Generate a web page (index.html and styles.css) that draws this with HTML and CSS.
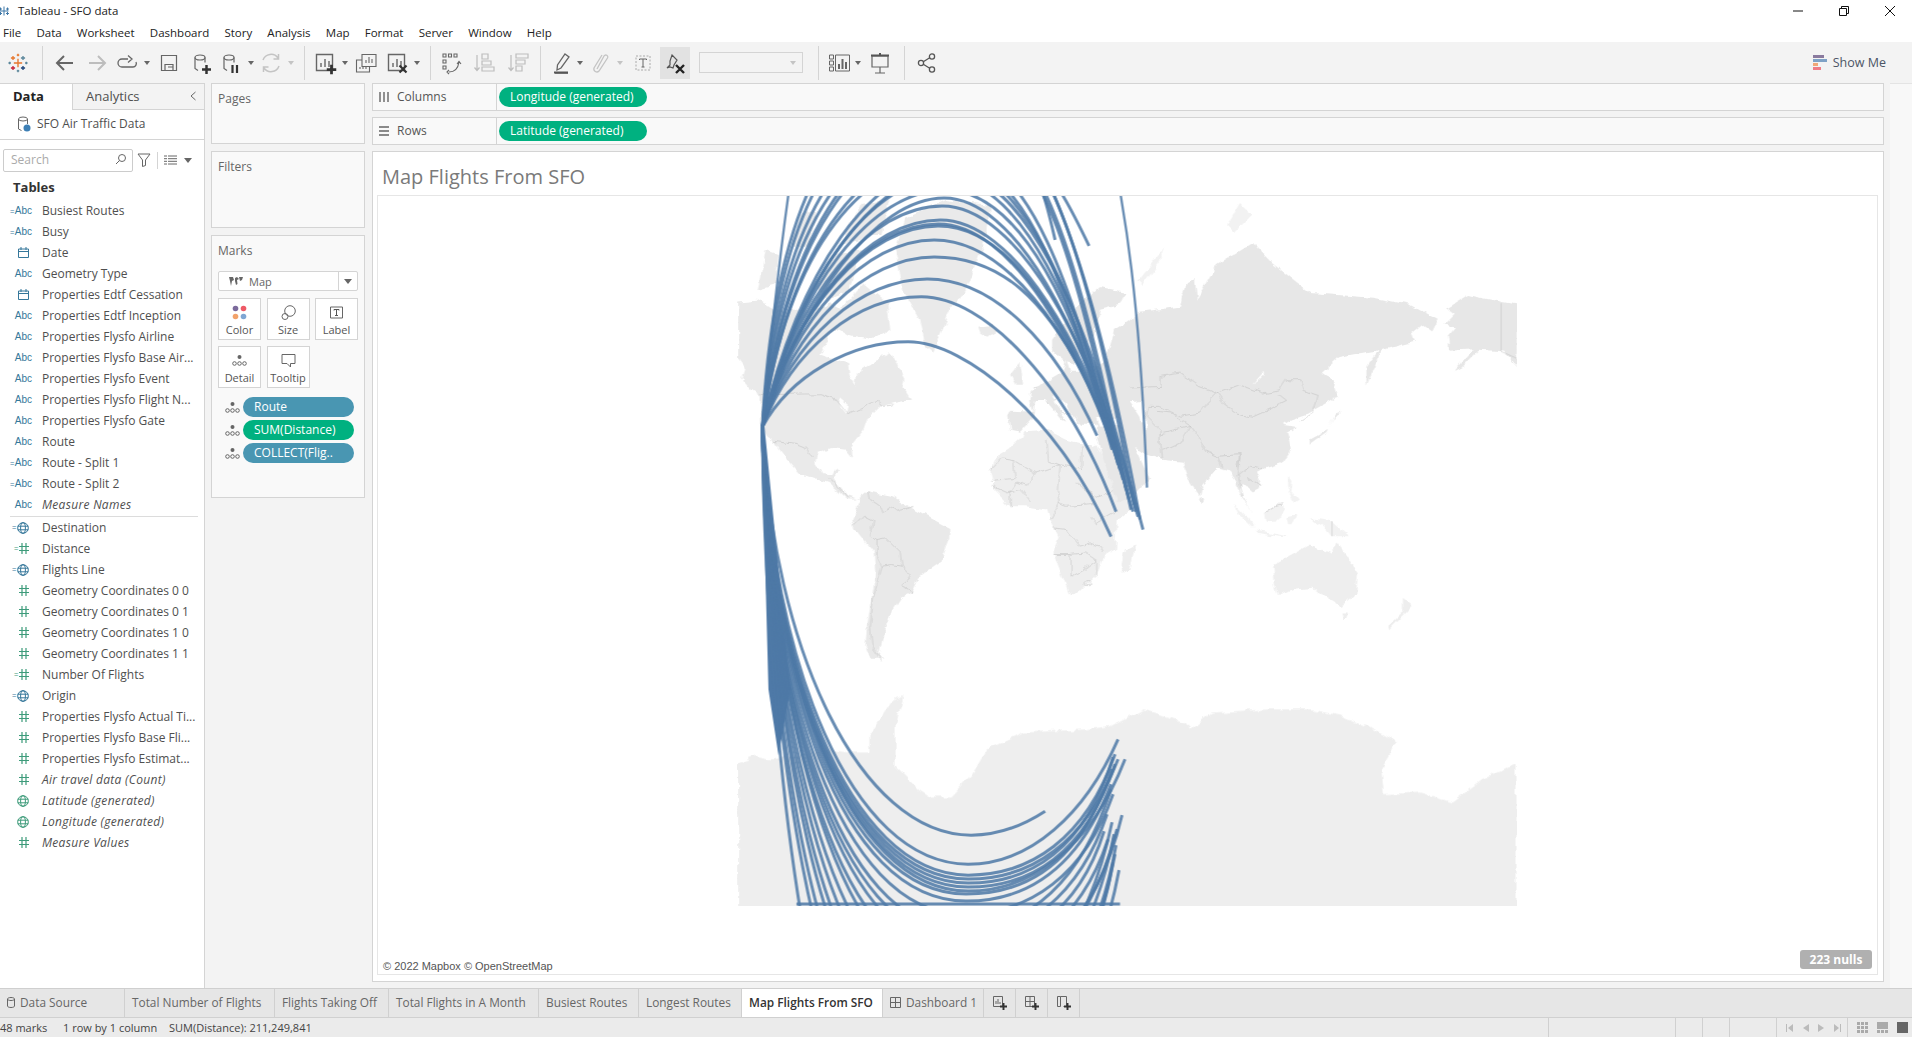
FILE: index.html
```html
<!DOCTYPE html>
<html lang="en">
<head>
<meta charset="utf-8">
<title>Tableau - SFO data</title>
<link rel="stylesheet" href="styles.css">
</head>
<body>
<svg class="sprite" aria-hidden="true">
  <defs>
    <symbol id="i-logo" viewBox="0 0 24 24">
      <g fill="none" stroke-width="1.6">
        <path stroke="#e8762c" d="M12 7v10M7 12h10"/>
        <path stroke="#e8762c" d="M6 3.500v5M3.500 6h5M12 1v3M10.500 2.500h3"/>
        <path stroke="#5b879b" d="M18 3.500v5M15.500 6h5M22 10.500v3M20.500 12h3M2 10.500v3M.5 12h3"/>
        <path stroke="#c72037" d="M6 15.500v5M3.500 18h5"/>
        <path stroke="#1f447a" d="M18 15.500v5M15.500 18h5"/>
        <path stroke="#5b879b" d="M12 20v3M10.500 21.500h3"/>
      </g>
    </symbol>
    <symbol id="i-hash" viewBox="0 0 10 11"><path d="M3 0v11M7 0v11M0 3.500h10M0 7.500h10" fill="none" stroke="currentColor" stroke-width="1.200"/></symbol>
    <symbol id="i-globe" viewBox="0 0 12 12"><g fill="none" stroke="currentColor"><circle cx="6" cy="6" r="5.300"/><ellipse cx="6" cy="6" rx="2.400" ry="5.300"/><path d="M.7 4.200h10.600M.7 7.800h10.600"/></g></symbol>
    <symbol id="i-cal" viewBox="0 0 11 11"><path d="M.5 2h10v8.500H.5zM.5 4.500h10M3 0v3M8 0v3" fill="none" stroke="currentColor"/></symbol>
    <symbol id="i-detail" viewBox="0 0 15 11"><g fill="none" stroke="#666"><circle cx="2.500" cy="8.500" r="1.800"/><circle cx="7.500" cy="8.500" r="1.800"/><circle cx="12.500" cy="8.500" r="1.800"/></g><circle cx="7.500" cy="2" r="2" fill="#666"/></symbol>
    <symbol id="i-plus" viewBox="0 0 8 8"><path d="M4 0v8M0 4h8" stroke="#333" stroke-width="2.200"/></symbol>
  </defs>
</svg>
<div class="app">
  <header class="titlebar">
    <svg class="title-logo" viewBox="0 0 24 24"><path d="M12 3v18M3 12h18M5 5v6M2 8h6M19 5v6M16 8h6M5 14v6M2 17h6M19 14v6M16 17h6" fill="none" stroke="#3f78a8" stroke-width="2"/></svg>
    <span class="title-text">Tableau - SFO data</span>
    <div class="winctl">
      <svg viewBox="0 0 10 10"><path d="M0 5h10" stroke="#111"/></svg>
      <svg viewBox="0 0 10 10"><path d="M.5 2.500h7v7h-7zM2.500 2.500v-2h7v7h-2" fill="none" stroke="#111"/></svg>
      <svg viewBox="0 0 10 10"><path d="M0 0l10 10M10 0L0 10" stroke="#111"/></svg>
    </div>
  </header>
  <nav class="menubar">
    <span>File</span><span>Data</span><span>Worksheet</span><span>Dashboard</span><span>Story</span><span>Analysis</span><span>Map</span><span>Format</span><span>Server</span><span>Window</span><span>Help</span>
  </nav>
  <div class="toolbar">
    <div class="tb w30 m3"><svg width="20" height="20" viewBox="0 0 24 24"><use href="#i-logo"/></svg></div>
    <i class="sep m9"></i>
    <div class="tb w30 m7"><svg width="24" height="24" viewBox="0 0 24 24"><path d="M20 12H4M11 5l-7 7 7 7" fill="none" stroke="#666" stroke-width="2"/></svg></div>
    <div class="tb w30 m2"><svg width="24" height="24" viewBox="0 0 24 24"><path d="M4 12h16M13 5l7 7-7 7" fill="none" stroke="#bdbdbd" stroke-width="2"/></svg></div>
    <div class="tb w30"><svg width="24" height="24" viewBox="0 0 24 24"><path d="M13 8H7a4 4 0 0 0 0 8h11a3.500 3.500 0 0 0 3-5M13 4.500l4 3.500-4 3.500" fill="none" stroke="#666" stroke-width="1.300"/></svg></div>
    <div class="tb w10"><b class="caret"></b></div>
    <div class="tb w30 m2"><svg width="24" height="24" viewBox="0 0 24 24"><path d="M4.500 4.500h15v15h-15zM8 19.500v-6h8v6M11 16h5" fill="none" stroke="#666" stroke-width="1.200"/></svg></div>
    <div class="tb w30 m2"><svg width="24" height="24" viewBox="0 0 24 24"><g fill="none" stroke="#666" stroke-width="1.200"><ellipse cx="11" cy="6.500" rx="5" ry="2.500"/><path d="M6 6.500v11l3 2M16 6.500v5"/></g><use href="#i-plus" x="13" y="14" width="9" height="9"/></svg></div>
    <div class="tb w30"><svg width="24" height="24" viewBox="0 0 24 24"><g fill="none" stroke="#666" stroke-width="1.200"><ellipse cx="10" cy="6.500" rx="5" ry="2.500"/><path d="M5 6.500v11l3 2M15 6.500v5"/></g><path d="M13.500 14v8M18 14v8" stroke="#333" stroke-width="2.200"/></svg></div>
    <div class="tb w10"><b class="caret"></b></div>
    <div class="tb w30"><svg width="24" height="24" viewBox="0 0 24 24"><path d="M4 9a8.500 8.500 0 0 1 15-2M20 15a8.500 8.500 0 0 1-15 2M19.500 3v5h-5M4.500 21v-5h5" fill="none" stroke="#c4c4c4" stroke-width="1.500"/></svg></div>
    <div class="tb w10"><b class="caret off"></b></div>
    <i class="sep m8"></i>
    <div class="tb w30 m5"><svg width="24" height="24" viewBox="0 0 24 24"><path d="M3.500 3.500h16v16h-16zM8 16v-4M12 16V8M16 16v-6" fill="none" stroke="#666" stroke-width="1.400"/><use href="#i-plus" x="13.500" y="13.500" width="10" height="10"/></svg></div>
    <div class="tb w10"><b class="caret"></b></div>
    <div class="tb w30 m1"><svg width="24" height="24" viewBox="0 0 24 24"><path d="M8 3.500h14v12H8zM12 12V9M15 12V6M18 12V8M8 9H2.500v12h13v-5.500M6 18v-2M9 18v-2M12 18v-2" fill="none" stroke="#666" stroke-width="1.100"/></svg></div>
    <div class="tb w30 m1"><svg width="24" height="24" viewBox="0 0 24 24"><path d="M3.500 3.500h16v16h-16zM8 16v-4M12 16V8M16 16v-6" fill="none" stroke="#666" stroke-width="1.400"/><path d="M14.500 14.500l7 7M21.500 14.500l-7 7" stroke="#333" stroke-width="2.200"/></svg></div>
    <div class="tb w10"><b class="caret"></b></div>
    <i class="sep m8"></i>
    <div class="tb w30 m5"><svg width="24" height="24" viewBox="0 0 24 24"><path d="M4 3h3v3H4zM9.500 3h3v3h-3zM15 3h3v3h-3zM4 9h3v3H4zM4 15h3v3H4zM10 21c5 0 9-3 10-10M18 13l2-2.500 2 2.500M10 19l-2 2 2 2" fill="none" stroke="#666" stroke-width="1.100"/></svg></div>
    <div class="tb w30 m3"><svg width="24" height="24" viewBox="0 0 24 24"><path d="M5 4v15M2.500 16.500L5 19.500l2.500-3M10 3h6v5h-6zM10 10h9v4h-9zM10 16h12v4H10z" fill="none" stroke="#bdbdbd" stroke-width="1.200"/></svg></div>
    <div class="tb w30 m4"><svg width="24" height="24" viewBox="0 0 24 24"><path d="M5 4v15M2.500 16.500L5 19.500l2.500-3M10 3h12v4H10zM10 9h9v4h-9zM10 15h6v5h-6z" fill="none" stroke="#bdbdbd" stroke-width="1.200"/></svg></div>
    <i class="sep m7"></i>
    <div class="tb w26 m8"><svg width="24" height="24" viewBox="0 0 24 24"><path d="M15 3l4 3-8 11-4 2 .5-5zM5 22h13" fill="none" stroke="#666" stroke-width="1.300"/><path d="M4 21.500h14" stroke="#555" stroke-width="2"/></svg></div>
    <div class="tb w10"><b class="caret"></b></div>
    <div class="tb w26 m2"><svg width="24" height="24" viewBox="0 0 24 24"><path d="M9 18L16 5a2 2 0 0 1 3.500 2L11 20a3 3 0 0 1-5-3l8-13" fill="none" stroke="#c4c4c4" stroke-width="1.300"/></svg></div>
    <div class="tb w10 m2"><b class="caret off"></b></div>
    <div class="tb w26 m5"><svg width="24" height="24" viewBox="0 0 24 24"><path d="M5 5h14v14H5z" fill="none" stroke="#aaa" stroke-dasharray="2 1.500"/><path d="M8.500 9V8h7v1M12 8v8M10.500 16h3" fill="none" stroke="#666"/></svg></div>
    <div class="tb w30 m4 active"><svg width="24" height="24" viewBox="0 0 24 24"><path d="M9 3l5 5-3 5-1 3-3-1-3 1 3-3 0-4z" fill="none" stroke="#555" stroke-width="1.200" transform="translate(0 1)"/><path d="M13 14l8 8M21 14l-8 8" stroke="#222" stroke-width="2.400"/></svg></div>
    <div class="tb-select m9"><b class="caret off"></b></div>
    <i class="sep m15"></i>
    <div class="tb w26 m8"><svg width="24" height="24" viewBox="0 0 24 24"><path d="M1.500 4h4v4h-4zM1.500 10h4v4h-4zM1.500 16h4v4h-4zM7.500 4h14v16h-14z" fill="none" stroke="#666" stroke-width="1"/><path d="M11 18v-5M14.500 18V8M18 18v-7" stroke="#666" stroke-width="2"/></svg></div>
    <div class="tb w10"><b class="caret"></b></div>
    <div class="tb w28 m3"><svg width="24" height="24" viewBox="0 0 24 24"><path d="M4 5h16v11H4zM12 16v6M7 22h10" fill="none" stroke="#666" stroke-width="1.200"/><path d="M3 4.500h18M12 2v2" stroke="#555" stroke-width="2"/></svg></div>
    <i class="sep m10"></i>
    <div class="tb w30 m7"><svg width="24" height="24" viewBox="0 0 24 24"><g fill="none" stroke="#555" stroke-width="1.300"><circle cx="6" cy="12" r="2.600"/><circle cx="17" cy="5.500" r="2.600"/><circle cx="17" cy="18.500" r="2.600"/><path d="M8.300 10.700l6.400-3.900M8.300 13.300l6.400 3.900"/></g></svg></div>
    <div class="showme">
      <svg width="14" height="16" viewBox="0 0 14 16"><path fill="#8a7a9e" d="M0 0h11v3H0z"/><path fill="#7fa2c6" d="M0 4h14v3H0z"/><path fill="#f0a777" d="M0 8h5v3H0z"/><path fill="#ef7c86" d="M0 12h8v3H0z"/></svg>
      <span>Show Me</span>
    </div>
  </div>

  <main class="main">
    <aside class="datapane">
      <div class="tabs"><div class="tab on">Data</div><div class="tab">Analytics<svg class="collapse" width="8" height="10" viewBox="0 0 8 10"><path d="M6.500 1l-4.500 4 4.500 4" fill="none" stroke="#666"/></svg></div></div>
      <div class="source">
        <svg width="14" height="16" viewBox="0 0 14 16"><g fill="none" stroke="#666"><ellipse cx="6" cy="3" rx="4.500" ry="2"/><path d="M1.500 3v10l3 1.500M10.500 3v5"/></g><circle cx="10" cy="12" r="3.500" fill="#3d7fb5"/></svg>
        <span>SFO Air Traffic Data</span>
      </div>
      <div class="searchrow">
        <div class="search"><span>Search</span><svg width="12" height="12" viewBox="0 0 12 12"><circle cx="7" cy="5" r="3.500" fill="none" stroke="#666"/><path d="M4.500 7.500L1 11" stroke="#666"/></svg></div>
        <svg class="funnel" width="14" height="14" viewBox="0 0 14 14"><path d="M1 1h12L8.500 7v5.500l-3 1V7z" fill="none" stroke="#666"/></svg>
        <i class="vsep"></i>
        <svg width="13" height="10" viewBox="0 0 13 10"><path d="M0 1h3M4 1h9M0 3.700h3M4 3.700h9M0 6.300h3M4 6.300h9M0 9h3M4 9h9" stroke="#666"/></svg>
        <b class="caret dark"></b>
      </div>
      <div class="tables">Tables</div>
      <ul class="fields">
        <li><span class="ty"><em>=</em>Abc</span>Busiest Routes</li>
        <li><span class="ty"><em>=</em>Abc</span>Busy</li>
        <li><span class="ty gl"><svg class="cal" viewBox="0 0 11 11"><use href="#i-cal"/></svg></span>Date</li>
        <li><span class="ty">Abc</span>Geometry Type</li>
        <li><span class="ty gl"><svg class="cal" viewBox="0 0 11 11"><use href="#i-cal"/></svg></span>Properties Edtf Cessation</li>
        <li><span class="ty">Abc</span>Properties Edtf Inception</li>
        <li><span class="ty">Abc</span>Properties Flysfo Airline</li>
        <li><span class="ty">Abc</span>Properties Flysfo Base Air...</li>
        <li><span class="ty">Abc</span>Properties Flysfo Event</li>
        <li><span class="ty">Abc</span>Properties Flysfo Flight N...</li>
        <li><span class="ty">Abc</span>Properties Flysfo Gate</li>
        <li><span class="ty">Abc</span>Route</li>
        <li><span class="ty"><em>=</em>Abc</span>Route - Split 1</li>
        <li><span class="ty"><em>=</em>Abc</span>Route - Split 2</li>
        <li class="it"><span class="ty">Abc</span>Measure Names</li>
      </ul>
      <hr class="divider">
      <ul class="fields">
        <li><span class="ty gl"><em>=</em><svg class="globe" viewBox="0 0 12 12"><use href="#i-globe"/></svg></span>Destination</li>
        <li><span class="ty gl grn"><em>=</em><svg class="hash" viewBox="0 0 10 11"><use href="#i-hash"/></svg></span>Distance</li>
        <li><span class="ty gl"><em>=</em><svg class="globe" viewBox="0 0 12 12"><use href="#i-globe"/></svg></span>Flights Line</li>
        <li><span class="ty gl grn"><svg class="hash" viewBox="0 0 10 11"><use href="#i-hash"/></svg></span>Geometry Coordinates 0 0</li>
        <li><span class="ty gl grn"><svg class="hash" viewBox="0 0 10 11"><use href="#i-hash"/></svg></span>Geometry Coordinates 0 1</li>
        <li><span class="ty gl grn"><svg class="hash" viewBox="0 0 10 11"><use href="#i-hash"/></svg></span>Geometry Coordinates 1 0</li>
        <li><span class="ty gl grn"><svg class="hash" viewBox="0 0 10 11"><use href="#i-hash"/></svg></span>Geometry Coordinates 1 1</li>
        <li><span class="ty gl grn"><em>=</em><svg class="hash" viewBox="0 0 10 11"><use href="#i-hash"/></svg></span>Number Of Flights</li>
        <li><span class="ty gl"><em>=</em><svg class="globe" viewBox="0 0 12 12"><use href="#i-globe"/></svg></span>Origin</li>
        <li><span class="ty gl grn"><svg class="hash" viewBox="0 0 10 11"><use href="#i-hash"/></svg></span>Properties Flysfo Actual Ti...</li>
        <li><span class="ty gl grn"><svg class="hash" viewBox="0 0 10 11"><use href="#i-hash"/></svg></span>Properties Flysfo Base Fli...</li>
        <li><span class="ty gl grn"><svg class="hash" viewBox="0 0 10 11"><use href="#i-hash"/></svg></span>Properties Flysfo Estimat...</li>
        <li class="it"><span class="ty gl grn"><svg class="hash" viewBox="0 0 10 11"><use href="#i-hash"/></svg></span>Air travel data (Count)</li>
        <li class="it"><span class="ty gl grn"><svg class="globe" viewBox="0 0 12 12"><use href="#i-globe"/></svg></span>Latitude (generated)</li>
        <li class="it"><span class="ty gl grn"><svg class="globe" viewBox="0 0 12 12"><use href="#i-globe"/></svg></span>Longitude (generated)</li>
        <li class="it"><span class="ty gl grn"><svg class="hash" viewBox="0 0 10 11"><use href="#i-hash"/></svg></span>Measure Values</li>
      </ul>
    </aside>

    <section class="cards">
      <div class="card pages"><h3>Pages</h3></div>
      <div class="card filters"><h3>Filters</h3></div>
      <div class="card marks">
        <h3>Marks</h3>
        <div class="marktype">
          <svg width="14" height="9" viewBox="0 0 14 9"><path d="M0 0h4l1 3-2 1-1 5-1-5zM6 1l2-1 2 2-2 1 .5 4-1.500 1-1-4zM10 0h4l-1 3-2 1z" fill="#666"/></svg>
          <span>Map</span><div class="mt-arrow"><b class="caret dark"></b></div>
        </div>
        <div class="markbtns">
          <div class="mb"><svg width="15" height="15" viewBox="0 0 15 15"><circle cx="3.500" cy="3.500" r="2.800" fill="#7b6a9c"/><circle cx="11.500" cy="3.500" r="2.800" fill="#ee5a66"/><circle cx="3.500" cy="11.500" r="2.800" fill="#f2a26b"/><circle cx="11.500" cy="11.500" r="2.800" fill="#7fa6d3"/></svg><span>Color</span></div>
          <div class="mb"><svg width="15" height="15" viewBox="0 0 15 15"><g fill="none" stroke="#666"><circle cx="9" cy="6" r="5.300"/><circle cx="4" cy="11.500" r="3"/></g></svg><span>Size</span></div>
          <div class="mb"><svg width="15" height="15" viewBox="0 0 15 15"><path d="M1.500 2h12v11h-12z" fill="none" stroke="#666"/><path d="M5 5.500V4.500h5v1M7.500 4.500v6M6 10.500h3" fill="none" stroke="#555"/></svg><span>Label</span></div>
          <div class="mb"><svg width="15" height="15" viewBox="0 0 15 11"><use href="#i-detail"/></svg><span>Detail</span></div>
          <div class="mb"><svg width="15" height="15" viewBox="0 0 15 15"><path d="M1 1.500h13v9H9.500V14L6 10.500H1z" fill="none" stroke="#666"/></svg><span>Tooltip</span></div>
        </div>
        <div class="pillrow"><svg width="15" height="11" viewBox="0 0 15 11"><use href="#i-detail"/></svg><div class="pill blue">Route</div></div>
        <div class="pillrow"><svg width="15" height="11" viewBox="0 0 15 11"><use href="#i-detail"/></svg><div class="pill green">SUM(Distance)</div></div>
        <div class="pillrow"><svg width="15" height="11" viewBox="0 0 15 11"><use href="#i-detail"/></svg><div class="pill blue">COLLECT(Flig..</div></div>
      </div>
    </section>

    <section class="work">
      <div class="shelf">
        <div class="shelf-label"><svg width="10" height="10" viewBox="0 0 10 10"><path d="M1 0v10M5 0v10M9 0v10" stroke="#666" stroke-width="1.400"/></svg><span>Columns</span></div>
        <div class="shelf-pill">Longitude (generated)</div>
      </div>
      <div class="shelf">
        <div class="shelf-label"><svg width="10" height="10" viewBox="0 0 10 10"><path d="M0 1h10M0 5h10M0 9h10" stroke="#666" stroke-width="1.400"/></svg><span>Rows</span></div>
        <div class="shelf-pill">Latitude (generated)</div>
      </div>
      <div class="viz">
        <h1 class="viz-title">Map Flights From SFO</h1>
        <div class="canvas">
          <svg class="map" viewBox="378 196 1499 779">
            <defs>
              <clipPath id="land-clip"><rect x="737" y="190" width="780" height="716"/></clipPath>
              <clipPath id="arc-clip"><rect x="378" y="196" width="1499" height="710"/></clipPath>
              <filter id="rough" x="-5%" y="-5%" width="110%" height="110%">
                <feTurbulence type="fractalNoise" baseFrequency=".09" numOctaves="3" seed="4" result="n"/>
                <feDisplacementMap in="SourceGraphic" in2="n" scale="7" xChannelSelector="R" yChannelSelector="G"/>
                <feGaussianBlur stdDeviation=".35"/>
              </filter>
            </defs>
            <g clip-path="url(#land-clip)">
             <g filter="url(#rough)">
              <!-- Antarctica -->
              <path class="l-ant" transform="translate(720 580) scale(.523 .3333)" d="M33 550L65 530 100 540 200 510 250 520 285 520 285 470 325 370 350 350 335 440 335 560 380 630 405 655 440 655 480 590 510 510 580 460 700 450 750 440 810 390 890 430 900 450 940 400 1050 390 1130 390 1190 410 1250 450 1295 490 1265 570 1270 645 1340 640 1400 670 1460 600 1524 555V1000H33z"/>
              <!-- Arctic and Greenland -->
              <g class="l-am">
                <path d="M903 290L895 250 905 218 945 200 990 205 985 240 965 290 950 310 933 352 925 345 920 320z"/>
                <path d="M757 290L765 250 778 255 775 285zM790 247L800 215 815 210 810 245zM840 245L860 205 890 200 880 235zM815 285L835 255 860 250 850 290 825 300z"/>
                <path d="M978 327L994 325 997 332 987 337 980 333zM1010 375L1020 362 1023 385 1015 385z"/>
              </g>
              <!-- North America -->
              <g transform="translate(730 290) scale(.3333)">
                <path class="l-am" d="M22 35L80 30 130 60 190 60 260 60 300 40 350 70 340 100 300 130 270 195 350 220 355 260 375 290 380 250 440 210 480 190 525 270 520 290 545 330 490 340 450 350 410 390 400 420 360 470 365 505 345 480 300 475 260 490 255 520 275 550 305 555 315 535 325 545 310 570 350 620 395 635 415 605 385 630 350 630 295 580 205 550 165 505 130 455 110 440 92 410 90 320 60 300 35 270 45 235 22 205z"/>
                <path class="l-am" d="M310 110L340 50 400 -20 470 40 480 120 420 150 360 140z"/>
                <path class="l-sea" d="M325 320L355 345 350 375 330 350z"/>
                <path class="l-sa" d="M415 605L490 620 555 660 660 715 660 745 630 820 570 860 545 910 515 925 490 960 465 1010 445 1100 460 1105 420 1105 405 1070 410 1010 425 920 435 850 430 790 375 720 365 690 385 640 395 620z"/>
                <path class="l-af" d="M780 540L800 500 835 480 880 440 885 425 950 420 1010 450 1050 460 1090 475 1100 470 1130 520 1160 590 1200 640 1205 655 1160 690 1155 780 1120 800 1100 860 1050 910 1020 918 1000 870 970 790 985 740 960 690 950 660 880 650 840 650 790 600z"/>
                <path class="l-af" d="M1215 765L1200 840 1180 850 1175 820 1185 780z"/>
                <g class="border">
                  <path d="M90 315L270 312 320 330 355 375 400 355 440 335 455 350 490 345M130 455L200 465 225 475 245 505"/>
                  <path d="M415 605L420 630 450 650 455 670 490 650 510 665 555 650M370 710L400 680 430 695 420 740 440 750 465 745 510 790 515 830 535 850 540 870 515 890 545 910M440 750L440 800 455 830 485 825 515 830M455 830L430 920 420 1010 425 1070 450 1110M295 565L320 590 350 625"/>
                  <path d="M780 540L815 505 850 510 855 570 780 575M850 510L915 550 990 525 955 510 950 450M915 550L890 590 860 580 840 610 840 650M990 525L985 600 990 640 960 690M990 525L1055 540 1055 470M1040 580L1100 620 1160 600M1160 665L1100 700 1085 680M985 640L1010 650 1090 645M970 715L1010 720 1050 770 1080 760 1110 770 1120 790M970 795L1020 795 1020 860 1060 840 1100 810M1020 795L1070 790 1100 810M1100 860V810M785 590L830 610 870 600 900 640"/>
                  <circle cx="1075" cy="882" r="7"/>
                  <path d="M910 295L935 290 950 340 1000 320 1060 340 1090 325M950 340L1010 370 1050 385"/>
                </g>
              </g>
              <!-- Europe and Asia -->
              <path class="l-as" d="M1052 340L1072 312 1100 287 1125 292 1120 305 1100 310 1095 335 1080 352 1075 365 1065 362 1052 352z"/>
              <path class="l-as" d="M1008 415L1010 411 1033 412 1030 400 1032 392 1045 382 1062 372 1066 360 1070 372 1085 372 1105 362 1115 330 1128 322 1140 312 1180 307 1185 285 1195 280 1197 300 1217 265 1253 243 1272 263 1311 293 1373 298 1410 305 1438 320 1432 332 1422 325 1412 333 1415 342 1383 350 1363 353 1340 357 1322 373 1337 383 1333 400 1310 413 1298 417 1283 425 1297 427 1287 433 1292 450 1283 463 1267 468 1257 473 1263 487 1253 493 1242 483 1240 490 1252 513 1242 497 1230 470 1218 467 1202 487 1200 497 1187 477 1182 462 1162 460 1147 455 1135 447 1145 470 1150 478 1133 497 1118 505 1100 450 1097 437 1098 425 1080 425 1073 418 1065 402 1052 396 1066 422 1062 420 1045 400 1035 402 1033 418 1020 432 1010 430z"/>
              <path class="l-isl" d="M1138 280L1165 247 1160 262 1143 285zM1227 225L1240 203 1253 215 1235 233z"/>
              <path class="l-sea" d="M1097 418H1117L1120 425 1100 427z"/>
              <g transform="translate(1110 270) scale(.3333)">
                <path class="l-sea" d="M60 395L95 390 105 430 110 480 100 470 90 440z"/>
                <path class="l-sea" d="M465 305L430 345 445 335 465 315z"/>
                <path class="l-as" d="M1010 115L1075 75 1170 95 1225 105 1225 290 1180 245 1110 240 1060 290 1030 305 1095 235 1020 240 1015 200 1040 170 1005 165 1035 135z"/>
                <path class="l-as" d="M770 290L820 225 800 280 770 345zM670 330L685 380 670 385zM680 425L655 480 600 510 600 525 650 490 670 450 695 420z"/>
                <circle class="l-as" cx="275" cy="690" r="7"/>
                <path class="l-isl" d="M375 705L440 770 425 770 385 730zM440 780L530 800 520 803 440 790zM465 730L510 700 520 720 495 760 470 755zM530 740L560 735 545 770 535 770zM535 620L548 640 545 660 570 690 555 700 535 650zM600 745L667 755 720 800 665 800 640 770z"/>
                <path class="l-af" d="M490 885L600 825 665 850 680 815 745 910 740 970 695 1010 650 985 610 955 560 960 505 980 495 945z"/>
                <path class="l-af" d="M695 1035L715 1035 710 1052 700 1052zM880 985L908 1010 880 1040 840 1080 836 1070 880 1030zM40 850L75 825 60 900 45 910 35 890z"/>
                <g class="border">
                  <path d="M60 355L150 350 150 320 210 310 265 350 320 370 290 400 270 430 210 440 150 410 115 410 110 440"/>
                  <path d="M320 370L390 345 460 370 510 360 530 330 570 330 580 365 625 380 610 430 570 455M320 370L345 405 380 430 435 440 480 420 530 395 505 375"/>
                  <path d="M110 440L150 480 150 530 155 570M150 490L240 470 270 510 290 545 325 560 390 555 385 590M240 470L210 520 155 545M325 560L335 590M390 555L385 620 400 680M385 620L420 590 460 600M410 620L440 640 460 650M140 425L185 430 210 450 240 470"/>
                  <path d="M470 730L500 710 520 705"/>
                </g>
              </g>
             </g>
             <g transform="translate(1110 270) scale(.3333)">
               <path class="border" d="M667 755V800M1175 100V245L1220 265"/>
             </g>
            </g>
            <g class="arcs" clip-path="url(#arc-clip)">
              <path class="bundle" d="M761 427L768 690 778 756 790 690 780 590 764 427z"/>
              <path d="M762 427C790 376 850 342 908 342S1060 420 1111 537"/>
              <path d="M762 427C792 349 857 297 921 297S1067 383 1116 512"/>
              <path d="M762 427C793 338 861 279 927 279S1055 342 1097 436"/>
              <path d="M762 427C795 325 865 257 934 257S1045 303 1082 372"/>
              <path d="M762 427C795 315 865 240 934 240S1070 325 1116 452"/>
              <path d="M762 427C795 305 868 224 938 224S1084 339 1133 512"/>
              <path d="M762 427C796 303 869 220 940 220S1088 339 1138 517"/>
              <path d="M762 427C795 306 868 226 938 226S1075 323 1120 470"/>
              <path d="M762 427C796 294 870 206 942 206S1093 336 1143 530"/>
              <path d="M762 427C800 300 875 198 944 198S1085 325 1129 500"/>
              <path d="M762 427C797 285 872 190 945 190S1079 306 1123 480"/>
              <path d="M762 427C797 278 872 178 945 178S1082 305 1128 495"/>
              <path d="M762 427C800 270 880 172 950 172S1090 310 1136 512"/>
              <path d="M762 427C797 270 874 165 948 165S1085 303 1131 510"/>
              <path d="M762 427C788 240 868 160 948 160S1070 300 1112 450"/>
              <path d="M762 427C790 230 872 150 950 150S1075 290 1118 465"/>
              <path d="M762 427C785 225 872 130 950 130S1040 174 1055 240"/>
              <path d="M762 427C784 222 870 125 948 125S1054 173 1089 246"/>
              <path d="M762 427C782 200 870 120 955 120S1075 260 1120 470"/>
              <path d="M762 427C780 190 865 110 952 110S1080 262 1126 490"/>
              <path d="M762 427C778 175 860 95 950 95S1090 260 1134 505"/>
              <path d="M762 427C775 167 860 80 945 80S1092 256 1140 520"/>
              <path class="thin" d="M762 427C770 340 780 250 790 180"/>
              <path class="thin" d="M1110 140C1125 210 1140 300 1147 488"/>

              <path d="M762 427C772 650 860 836 971 836C1000 836 1025 825 1045 812"/>
              <path d="M762 427C770 660 850 865 968 865C1030 865 1085 815 1118 740"/>
              <path d="M762 427C769 660 847 876 968 876C1030 876 1085 840 1115 755"/>
              <path d="M762 427C769 665 846 880 968 880C1030 880 1085 845 1118 760"/>
              <path d="M762 427C768 665 845 884 968 884C1030 884 1085 850 1113 758"/>
              <path d="M762 427C768 670 845 888 968 888C1030 888 1085 855 1115 765"/>
              <path d="M762 427C768 670 845 892 968 892C1030 892 1090 850 1125 760"/>
              <path d="M762 427C768 675 842 895 966 895C1030 895 1082 860 1112 770"/>
              <path d="M762 427C768 680 840 902 966 902C1030 902 1080 865 1111 785"/>
              <path d="M762 427C767 685 839 915 963 915C1030 915 1085 875 1113 795"/>
              <path d="M762 427C767 690 838 930 960 930C1030 930 1082 880 1111 790"/>
              <path d="M762 427C766 690 837 940 958 940C1025 940 1080 895 1107 815"/>
              <path d="M762 427C766 690 836 950 955 950C1020 950 1078 915 1104 832"/>
              <path d="M762 427C766 695 835 965 952 965C1020 965 1080 925 1108 840"/>
              <path d="M762 427C766 690 835 980 950 980C1030 980 1095 930 1122 816"/>
              <path d="M762 427C765 695 832 1000 948 1000C1020 1000 1088 940 1117 830"/>
              <path d="M762 427C765 700 830 1020 945 1020C1020 1020 1085 950 1112 823"/>
              <path d="M762 427C765 700 825 1040 942 1040C1015 1040 1088 970 1114 835"/>
              <path d="M762 427C765 690 820 1060 940 1060C1010 1060 1090 990 1116 846"/>
              <path d="M762 427C764 690 815 1090 938 1090C1005 1090 1090 995 1115 855"/>
              <path d="M762 427C764 680 810 1120 935 1120C1000 1120 1090 1000 1113 863"/>
              <path d="M762 427C763 650 800 1200 930 1200C1000 1200 1095 1000 1119 871"/>
              <path d="M796 905H1120"/>
            </g>
          </svg>
          <div class="attrib">© 2022 Mapbox © OpenStreetMap</div>
          <div class="nulls">223 nulls</div>
        </div>
      </div>
    </section>
    <div class="margin"></div>
  </main>

  <div class="tabbar">
    <div class="st ds"><svg width="8" height="11" viewBox="0 0 8 11"><path d="M.5 2v7c0 2 7 2 7 0V2c0-2-7-2-7 0zM.5 2c0 2 7 2 7 0" fill="none" stroke="#666"/></svg><span>Data Source</span></div>
    <div class="st s1">Total Number of Flights</div>
    <div class="st s2">Flights Taking Off</div>
    <div class="st s3">Total Flights in A Month</div>
    <div class="st s4">Busiest Routes</div>
    <div class="st s5">Longest Routes</div>
    <div class="st s6 current">Map Flights From SFO</div>
    <div class="st s7"><svg width="11" height="11" viewBox="0 0 11 11"><path d="M.5.5h10v10H.5zM5.500.5v10M.5 5.500h10" fill="none" stroke="#666"/></svg><span>Dashboard 1</span></div>
    <div class="st add"><svg width="16" height="16" viewBox="0 0 16 16"><path d="M1.500 1.500h9v10h-9zM4 9V6M6 9V4M8 9V7" fill="none" stroke="#666"/><use href="#i-plus" x="8" y="8" width="7" height="7"/></svg></div>
    <div class="st add"><svg width="16" height="16" viewBox="0 0 16 16"><path d="M1.500 1.500h9v10h-9zM6 1.500v10M1.500 6.500h9" fill="none" stroke="#666"/><use href="#i-plus" x="8" y="8" width="7" height="7"/></svg></div>
    <div class="st add"><svg width="16" height="16" viewBox="0 0 16 16"><path d="M1.500 1.500h3v10h-3zM4.500 1.500h6v10h-3" fill="none" stroke="#666"/><use href="#i-plus" x="8" y="8" width="7" height="7"/></svg></div>
  </div>

  <footer class="statusbar">
    <span class="s-a">48 marks</span><span class="s-b">1 row by 1 column</span><span class="s-c">SUM(Distance): 211,249,841</span>
    <div class="s-cells">
      <i class="cell c1"></i><i class="cell c2"></i><i class="cell c3"></i><i class="cell c4"></i>
      <div class="cell nav">
        <svg width="7" height="8" viewBox="0 0 7 8"><path d="M0 0h1v8H0zM7 0v8L2 4z" fill="#bbb"/></svg>
        <svg width="6" height="8" viewBox="0 0 6 8"><path d="M6 0v8L0 4z" fill="#bbb"/></svg>
        <svg width="6" height="8" viewBox="0 0 6 8"><path d="M0 0v8l6-4z" fill="#bbb"/></svg>
        <svg width="7" height="8" viewBox="0 0 7 8"><path d="M0 0v8l5-4zM6 0h1v8H6z" fill="#bbb"/></svg>
      </div>
      <div class="cell views">
        <svg width="11" height="11" viewBox="0 0 11 11"><path d="M0 0h3v3H0zM4 0h3v3H4zM8 0h3v3H8zM0 4h3v3H0zM4 4h3v3H4zM8 4h3v3H8zM0 8h3v3H0zM4 8h3v3H4zM8 8h3v3H8z" fill="#aaa"/></svg>
        <svg width="11" height="11" viewBox="0 0 11 11"><path d="M0 0h11v7H0zM0 8h3v3H0zM4 8h3v3H4zM8 8h3v3H8z" fill="#aaa"/></svg>
        <svg width="11" height="11" viewBox="0 0 11 11"><path d="M0 0h11v11H0z" fill="#666"/></svg>
      </div>
    </div>
  </footer>
</div>
</body>
</html>
```
FILE: styles.css
```css
* { box-sizing: border-box; }
html, body { margin: 0; padding: 0; height: 1037px; overflow: hidden; background: #fff; }
body { font-family: "Open Sans", "Noto Sans", sans-serif; font-size: 12px; color: #4f4f4f; }
h1, h3, ul { margin: 0; padding: 0; font-weight: normal; }
ul { list-style: none; }
.sprite { position: absolute; width: 0; height: 0; }

.app { width: 1912px; height: 1037px; overflow: hidden; display: grid; grid-template-rows: 21px 21px 41px 905px 30px 19px; }

.titlebar { display: flex; align-items: center; position: relative; background: #fff; color: #222; }
.title-logo { width: 12px; height: 12px; margin-left: -2px; }
.title-text { margin-left: 8px; font-size: 11.500px; }
.winctl { margin-left: auto; display: flex; align-items: center; height: 100%; padding-right: 17px; gap: 36px; }
.winctl svg { width: 10px; height: 10px; }

.menubar { display: flex; gap: 15.200px; padding: 1px 0 0 3px; align-items: center; color: #222; font-size: 11.500px; background: #fff; }

.toolbar { display: flex; align-items: center; background: #f3f3f3; border-bottom: 0; height: 41px; }
.tb { display: flex; align-items: center; justify-content: center; height: 30px; flex: none; }
.w10 { width: 10px; } .w26 { width: 26px; } .w28 { width: 28px; } .w30 { width: 30px; }
.m1 { margin-left: 1px; } .m2 { margin-left: 2px; } .m3 { margin-left: 3px; } .m4 { margin-left: 4px; }
.m5 { margin-left: 5px; } .m7 { margin-left: 7px; } .m8 { margin-left: 8px; } .m9 { margin-left: 9px; }
.m10 { margin-left: 10px; } .m15 { margin-left: 15px; }
.sep { width: 1px; height: 34px; background: #d4d4d4; flex: none; }
.caret { display: block; width: 0; height: 0; border: 3px solid transparent; border-top: 4px solid #666; border-bottom: 0; }
.caret.off { border-top-color: #c4c4c4; }
.caret.dark { border-width: 4px; border-top-width: 5px; border-bottom: 0; border-top-color: #666; }
.active { background: #e2e2e2; height: 32px; }
.tb-select { width: 104px; height: 21px; border: 1px solid #d4d4d4; display: flex; align-items: center; justify-content: flex-end; padding-right: 6px; flex: none; }
.showme { margin-left: auto; display: flex; align-items: center; gap: 6px; padding-right: 26px; font-size: 12.500px; color: #4b5566; }

.main { display: flex; background: #f3f3f3; height: 905px; }

.datapane { width: 205px; flex: none; background: #fff; border-right: 1px solid #d4d4d4; border-top: 1px solid #d4d4d4; }
.tabs { display: flex; height: 26px; }
.tab { display: flex; align-items: center; font-size: 13px; position: relative; padding: 0 0 2px 13px; color: #4f4f4f; background: #f3f3f3; border-left: 1px solid #d4d4d4; border-bottom: 1px solid #d4d4d4; flex: 1; }
.tab.on { width: 72px; flex: none; background: #fff; border: 0; font-weight: 700; color: #222; }
.collapse { position: absolute; right: 7px; top: 7px; }
.source { display: flex; align-items: center; height: 30px; padding: 0 0 2px 17px; gap: 6px; border-bottom: 1px solid #d4d4d4; }
.searchrow { display: flex; align-items: center; padding: 8px 0 0 3px; height: 32px; }
.search { width: 130px; height: 23px; border: 1px solid #ccc; border-radius: 2px; display: flex; align-items: center; justify-content: space-between; padding: 0 5px 2px 7px; color: #aaa; }
.funnel { margin-left: 4px; }
.vsep { width: 1px; height: 17px; background: #d4d4d4; margin: 0 6px; }
.searchrow .caret { margin-left: 7px; }
.tables { height: 29px; padding: 4px 0 0 13px; font-size: 13px; font-weight: 700; color: #333; line-height: 22px; }
.fields li { height: 21px; display: flex; align-items: center; white-space: nowrap; line-height: 19px; padding-bottom: 2px; }
.fields li.it { font-style: italic; letter-spacing: .3px; }
.ty { width: 32px; margin-right: 10px; text-align: right; color: #35779a; font-size: 10px; font-style: normal; letter-spacing: 0; flex: none; font-family: "Liberation Sans", sans-serif; }
.ty.gl { display: flex; justify-content: flex-end; align-items: center; padding-right: 3px; }
.ty em { font-style: normal; font-size: 7.500px; margin-right: .5px; }
.ty.grn { color: #3d9b7a; }
.hash { width: 10px; height: 11px; }
.globe { width: 12px; height: 12px; }
.cal { width: 11px; height: 11px; }
.divider { border: 0; height: 1px; background: #dcdcdc; margin: 0 6px 1px 10px; }

.cards { width: 154px; flex: none; margin-left: 6px; display: flex; flex-direction: column; gap: 7px; padding-top: 0; }
.card { background: #f9f9f9; border: 1px solid #d4d4d4; padding: 0 6px; }
.card h3 { font-size: 12px; color: #666; padding-top: 7px; line-height: 16px; }
.pages { height: 61px; }
.filters { height: 77px; }
.marks { height: 263px; }
.marktype { margin-top: 12px; height: 20px; border: 1px solid #d4d4d4; border-radius: 2px; background: #fff; display: flex; align-items: center; padding-left: 10px; font-size: 11px; color: #666; }
.marktype span { margin-left: 6px; }
.mt-arrow { margin-left: auto; width: 19px; height: 100%; border-left: 1px solid #d4d4d4; display: flex; align-items: center; justify-content: center; }
.markbtns { display: grid; grid-template-columns: repeat(3, 43px); grid-auto-rows: 42px; gap: 6px 5.500px; margin-top: 7px; margin-bottom: 9px; }
.mb { border: 1px solid #d4d4d4; background: #fff; display: flex; flex-direction: column; align-items: center; justify-content: flex-end; padding-bottom: 2px; gap: 3px; font-size: 11px; color: #555; line-height: 14px; }
.pillrow { display: flex; align-items: center; height: 20px; margin-bottom: 3px; padding-left: 7px; gap: 3px; }
.pill { width: 111px; height: 20px; border-radius: 10px; color: #fff; padding-left: 11px; line-height: 19px; white-space: nowrap; font-size: 12px; }
.blue { background: #4996b2; }
.green { background: #00b180; }

.work { width: 1512px; flex: none; margin-left: 7px; display: flex; flex-direction: column; gap: 6px; padding-bottom: 6px; }
.shelf { height: 28px; flex: none; background: #f9f9f9; border: 1px solid #d4d4d4; display: flex; align-items: center; }
.shelf-label { width: 124px; height: 100%; border-right: 1px solid #d4d4d4; display: flex; align-items: center; padding: 0 0 1px 6px; gap: 8px; color: #555; flex: none; }
.shelf-pill { width: 148px; height: 20px; margin-left: 2px; border-radius: 10px; background: #00b180; color: #fff; padding-left: 11px; line-height: 19px; white-space: nowrap; }
.viz { flex: 1; min-height: 0; background: #fff; border: 1px solid #d4d4d4; padding: 0 5px 6px 4px; display: flex; flex-direction: column; }
.viz-title { height: 43px; flex: none; font-size: 20px; font-weight: 400; line-height: 49px; padding-left: 5px; color: #7a7a7a; white-space: nowrap; }
.canvas { flex: 1; min-height: 0; position: relative; border: 1px solid #e6e6e6; }
.map { display: block; width: 100%; height: 100%; }
.l-as { fill: #e7e7e7; }
.l-am { fill: #eaeaea; }
.l-sa { fill: #e9e9e9; }
.l-af { fill: #eeeeee; }
.l-ant { fill: #eeeeee; }
.l-isl { fill: #f2f2f2; }
.l-sea { fill: #fff; }
.border { fill: none; stroke: #bdbdbd; stroke-width: 1.500; }
.arcs path { fill: none; stroke: #4e79a7; stroke-width: 3; stroke-opacity: .86; }
.arcs .thin { stroke-width: 2.400; }
.arcs .bundle { fill: #4e79a7; stroke: none; }
.attrib { position: absolute; left: 5px; bottom: 1px; font-family: "Liberation Sans", sans-serif; font-size: 11px; line-height: 14px; color: #555; }
.nulls { position: absolute; right: 5px; bottom: 5px; width: 72px; height: 19px; border-radius: 3px; background: #b0b0b0; color: #fff; font-weight: 700; text-align: center; line-height: 19px; }
.margin { width: 22px; margin-left: 6px; background: #f8f8f8; border-top: 1px solid #e4e4e4; flex: none; }

.tabbar { display: flex; background: #e6e6e6; border-top: 1px solid #cfcfcf; border-bottom: 1px solid #d0d0d0; height: 30px; }
.st { display: flex; align-items: center; justify-content: flex-start; padding: 0 0 2px 7px; gap: 5px; border-right: 1px solid #d0d0d0; white-space: nowrap; color: #666; font-size: 11.850px; flex: none; }
.ds { width: 125px; } .s1 { width: 150px; } .s2 { width: 114px; } .s3 { width: 150px; } .s4 { width: 100px; } .s5 { width: 103px; } .s6 { width: 141px; } .s7 { width: 101px; }
.add { width: 32px; justify-content: center; padding: 0; }
.current { background: #fff; color: #333; font-weight: 600; }

.statusbar { display: flex; align-items: center; background: #ebebeb; font-size: 11px; color: #444; position: relative; white-space: nowrap; height: 19px; }
.s-a { width: 63px; } .s-b { width: 106px; }
.s-cells { position: absolute; right: 0; top: 0; height: 100%; display: flex; }
.cell { display: block; height: 100%; border-left: 1px solid #d0d0d0; flex: none; }
.c1 { width: 127px; } .c2 { width: 27px; } .c3 { width: 27px; } .c4 { width: 47px; }
.nav { width: 71px; display: flex; align-items: center; justify-content: space-between; padding: 0 6px 0 9px; }
.views { width: 65px; display: flex; align-items: center; justify-content: space-between; padding: 0 4px 0 9px; }
```
